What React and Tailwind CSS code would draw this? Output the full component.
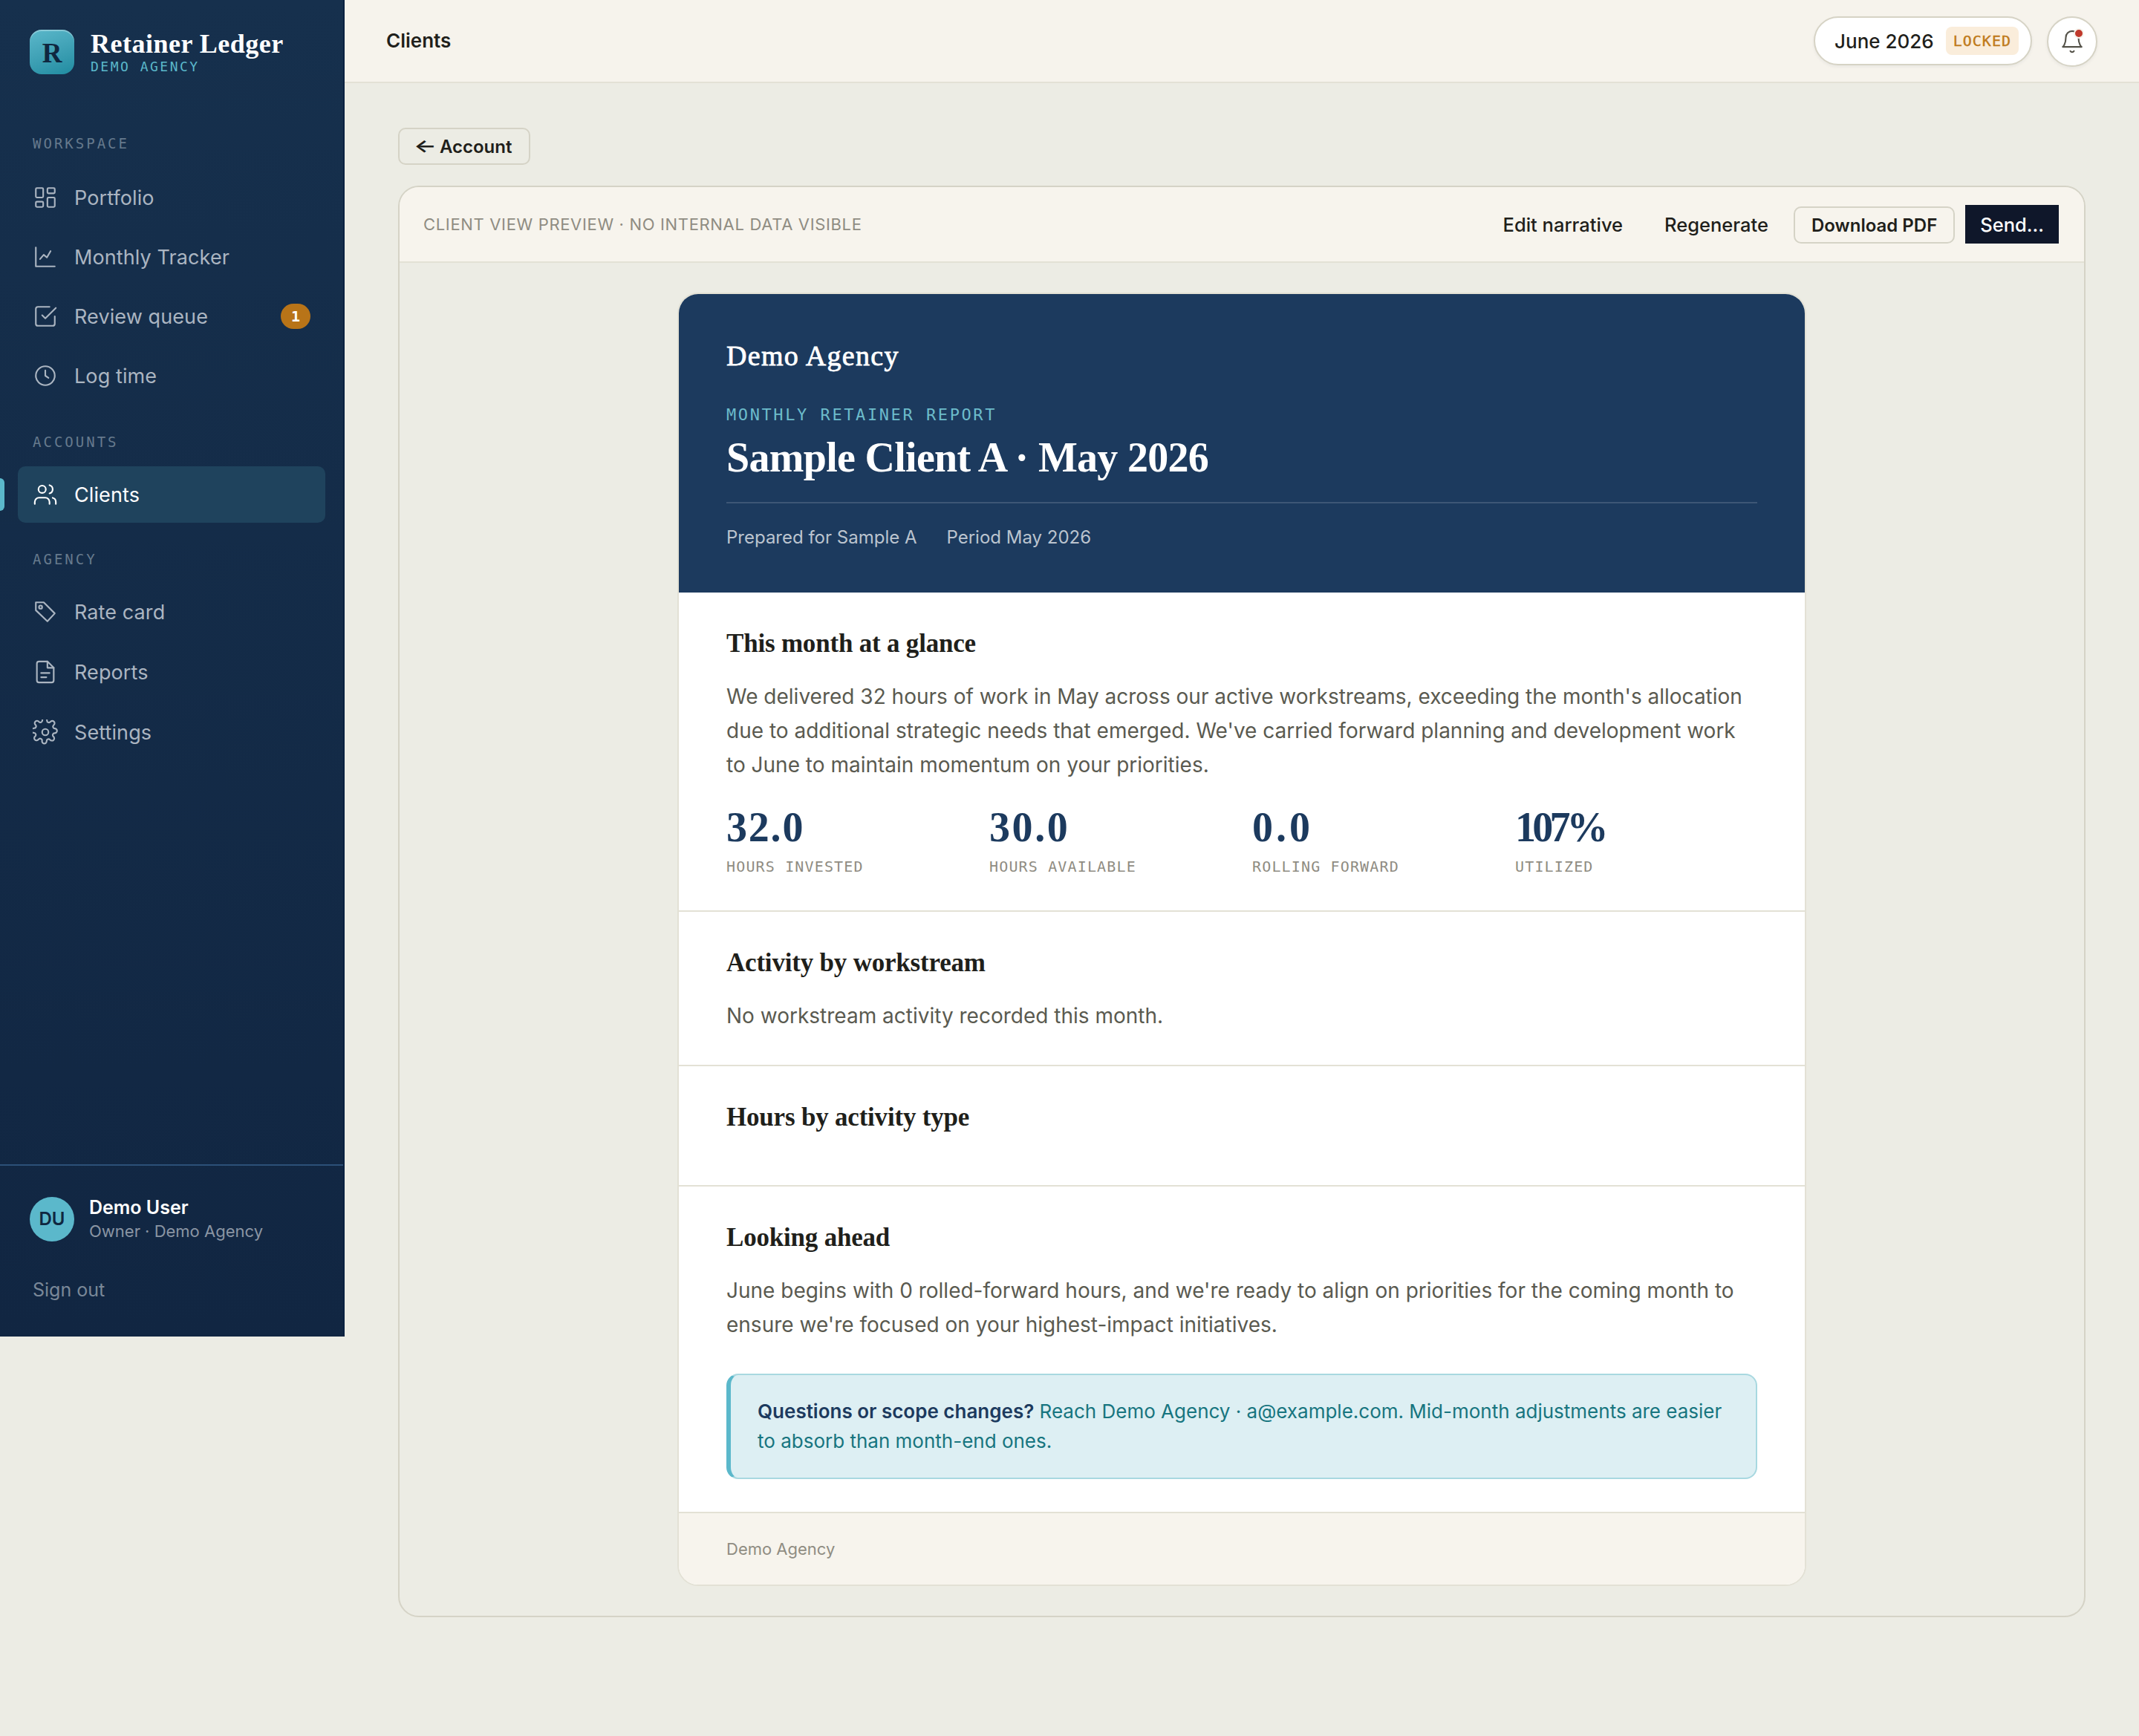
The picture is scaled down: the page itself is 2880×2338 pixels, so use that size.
import React from 'react';

const SERIF = "font-['Liberation_Serif',serif]";
const MONO = "font-['DejaVu_Sans_Mono',monospace]";

const icons = {
    portfolio: (
        <>
            <rect x="3" y="3" width="7" height="9" rx="1" />
            <rect x="14" y="3" width="7" height="5" rx="1" />
            <rect x="14" y="12" width="7" height="9" rx="1" />
            <rect x="3" y="16" width="7" height="5" rx="1" />
        </>
    ),
    tracker: (
        <>
            <path d="M3 3v18h18" />
            <path d="M7 14l3.5-4 3 2.5L17 6.5" />
        </>
    ),
    review: (
        <>
            <path d="M9 11l3 3L22 4" />
            <path d="M21 12v7a2 2 0 0 1-2 2H5a2 2 0 0 1-2-2V5a2 2 0 0 1 2-2h11" />
        </>
    ),
    clock: (
        <>
            <circle cx="12" cy="12" r="9" />
            <path d="M12 7v5l3 2" />
        </>
    ),
    clients: (
        <>
            <path d="M16 21v-2a4 4 0 0 0-4-4H6a4 4 0 0 0-4 4v2" />
            <circle cx="9" cy="7" r="3.5" />
            <path d="M22 21v-2a4 4 0 0 0-3-3.87" />
            <path d="M16 3.13a4 4 0 0 1 0 7.75" />
        </>
    ),
    tag: (
        <>
            <path d="M3 3h7.5L21 13.5l-7 7.5L3 10.5V3z" />
            <circle cx="7.5" cy="7.5" r="1.5" />
        </>
    ),
    report: (
        <>
            <path d="M14 2H6a2 2 0 0 0-2 2v16a2 2 0 0 0 2 2h12a2 2 0 0 0 2-2V8z" />
            <path d="M14 2v6h6M8 13h8M8 17h5" />
        </>
    ),
    settings: (
        <>
            <circle cx="12" cy="12" r="3" />
            <path
                transform="translate(-2.15 -2.4) scale(1.1)"
                strokeWidth="1.36"
                d="M19.4 15a1.7 1.7 0 0 0 .3 1.8l.1.1a2 2 0 1 1-2.8 2.8l-.1-.1a1.7 1.7 0 0 0-2.9 1.2V21a2 2 0 1 1-4 0v-.1A1.7 1.7 0 0 0 7 19.4l-.1.1a2 2 0 1 1-2.8-2.8l.1-.1a1.7 1.7 0 0 0-1.2-2.9H3a2 2 0 1 1 0-4h.1A1.7 1.7 0 0 0 4.6 7l-.1-.1a2 2 0 1 1 2.8-2.8l.1.1a1.7 1.7 0 0 0 2.9-1.2V3a2 2 0 1 1 4 0v.1a1.7 1.7 0 0 0 2.9 1.2l.1-.1a2 2 0 1 1 2.8 2.8l-.1.1a1.7 1.7 0 0 0 1.2 2.9H21a2 2 0 1 1 0 4h-.1a1.7 1.7 0 0 0-1.5 1z"
            />
        </>
    ),
    bell: (
        <>
            <path d="M6 8a6 6 0 0 1 12 0c0 7 3 9 3 9H3s3-2 3-9" />
            <path d="M10.3 21a1.94 1.94 0 0 0 3.4 0" />
        </>
    ),
};

const Icon = ({ name, className }) => (
    <svg
        className={className}
        viewBox="0 0 24 24"
        fill="none"
        stroke="currentColor"
        strokeWidth="1.5"
        strokeLinecap="round"
        strokeLinejoin="round"
    >
        {icons[name]}
    </svg>
);

const navGroups = [
    {
        label: 'Workspace',
        labelClass: 'mt-[79px] mb-[21px]',
        listClass: 'gap-1',
        items: [
            { name: 'Portfolio', icon: 'portfolio' },
            { name: 'Monthly Tracker', icon: 'tracker' },
            { name: 'Review queue', icon: 'review', badge: 1 },
            { name: 'Log time', icon: 'clock' },
        ],
    },
    {
        label: 'Accounts',
        labelClass: 'mt-[37px] mb-[19px]',
        listClass: 'gap-1',
        items: [{ name: 'Clients', icon: 'clients', active: true }],
    },
    {
        label: 'Agency',
        labelClass: 'mt-[35px] mb-[19px]',
        listClass: 'gap-[5px]',
        items: [
            { name: 'Rate card', icon: 'tag' },
            { name: 'Reports', icon: 'report' },
            { name: 'Settings', icon: 'settings' },
        ],
    },
];

const stats = [
    { value: '32.0', label: 'Hours invested', tracking: 'tracking-[1.8px]' },
    { value: '30.0', label: 'Hours available', tracking: 'tracking-[2.6px]' },
    { value: '0.0', label: 'Rolling forward', tracking: 'tracking-[4px]' },
    { value: '107%', label: 'Utilized', tracking: 'tracking-[-4.8px]' },
];

const NavItem = ({ item }) => (
    <div
        className={`relative flex h-[76px] items-center gap-[22px] rounded-[10px] px-5 text-[27px] ${
            item.active ? 'bg-[#1f435d] text-white' : 'text-[#abb5c1]'
        }`}
    >
        {item.active && (
            <span className="absolute top-4 -left-6 h-11 w-1.5 rounded-r-md bg-[#5bb8cb]"></span>
        )}
        <Icon name={item.icon} className="size-[34px] shrink-0" />
        <span className="pt-0.5 tracking-[0.1px]">{item.name}</span>
        {item.badge && (
            <span
                className={`ml-auto flex h-[34px] w-10 items-center justify-center rounded-full bg-[#b87418] text-[20px] font-bold text-white ${MONO}`}
            >
                {item.badge}
            </span>
        )}
    </div>
);

const Sidebar = () => (
    <aside className="flex h-[1800px] w-[464px] shrink-0 flex-col border-r-2 border-[#0a2140] bg-linear-to-b from-[#16304d] to-[#112642]">
        <div className="flex px-10 pt-10">
            <div
                className={`flex size-[60px] items-center justify-center rounded-[16px] bg-linear-160 from-[#5bb8cb] to-[#1f8ca1] pt-1 text-[37px] font-bold text-[#0f2740] shadow-[inset_0_2px_0_rgba(255,255,255,0.3)] ${SERIF}`}
            >
                R
            </div>
            <div className="ml-[22px]">
                <div
                    className={`pt-px text-[36px] leading-9 font-bold tracking-[0.5px] whitespace-nowrap text-white ${SERIF}`}
                >
                    Retainer Ledger
                </div>
                <div
                    className={`mt-[3px] text-[18px] leading-5 tracking-[2.5px] whitespace-nowrap text-[#5bb8cb] uppercase ${MONO}`}
                >
                    Demo Agency
                </div>
            </div>
        </div>

        <nav className="flex flex-col px-6">
            {navGroups.map(group => (
                <div key={group.label}>
                    <div
                        className={`pl-5 text-[19px] leading-7 tracking-[3px] text-[#667a8d] uppercase ${MONO} ${group.labelClass}`}
                    >
                        {group.label}
                    </div>
                    <div className={`flex flex-col ${group.listClass}`}>
                        {group.items.map(item => (
                            <NavItem key={item.name} item={item} />
                        ))}
                    </div>
                </div>
            ))}
        </nav>

        <div className="mt-auto h-[232px] border-t-2 border-[#2c5078] px-10 pt-10">
            <div className="flex items-center gap-5">
                <div className="flex size-[60px] items-center justify-center rounded-full bg-[#5bb8cb] text-[24px] font-semibold text-[#0f2740]">
                    DU
                </div>
                <div className="pt-px">
                    <div className="text-[25px] leading-[31px] font-semibold text-white">Demo User</div>
                    <div className="text-[22px] leading-8 text-[#8a95a3]">Owner · Demo Agency</div>
                </div>
            </div>
            <div className="mt-[45px] pl-1 text-[25px] leading-9 text-[#7a8898]">Sign out</div>
        </div>
    </aside>
);

const TopBar = () => (
    <header className="flex h-28 items-start justify-between border-b-2 border-[#e3e1d5] bg-[#f6f3ec] px-14">
        <h1 className="text-[26px] leading-[110px] font-semibold">Clients</h1>
        <div className="flex items-start gap-5 pt-[22px]">
            <div className="flex h-[66px] items-center gap-4 rounded-full border-2 border-[#d6d3c5] bg-white pr-4 pl-[26px] shadow-[0_2px_4px_rgba(20,40,60,0.06)]">
                <span className="text-[26px] font-medium">June 2026</span>
                <span
                    className={`flex h-[38px] items-center rounded-lg bg-[#faeddb] px-2.5 text-[20px] font-medium tracking-[1px] text-[#bf7a1a] [-webkit-text-stroke:0.4px] ${MONO}`}
                >
                    LOCKED
                </span>
            </div>
            <div className="relative flex size-[68px] items-center justify-center rounded-full border-2 border-[#d6d3c5] bg-white text-[#55534a] shadow-[0_2px_4px_rgba(20,40,60,0.06)]">
                <Icon name="bell" className="size-[34px]" />
                <span className="absolute top-3.5 right-4 size-3.5 rounded-full border-2 border-[#f6f3ec] bg-[#c0392b]"></span>
            </div>
        </div>
    </header>
);

const Section = ({ title, children, last }) => (
    <section className={`px-16 pt-[45px] pb-[43px] ${last ? '' : 'border-b-2 border-[#e3e1d5]'}`}>
        <h3 className={`mb-6 text-[35px] leading-[48px] font-bold tracking-[-0.2px] ${SERIF}`}>{title}</h3>
        {children}
    </section>
);

const bodyText = 'text-[28px] leading-[46.2px] text-[#5a5a50]';

const Report = () => (
    <article className="mx-auto w-[1520px] overflow-hidden rounded-[28px] border-2 border-[#e3e1d5] bg-white">
        <div className="h-[402px] bg-[#1c3a5e] px-16 pt-14 text-white">
            <div className={`text-[38px] leading-[54px] tracking-[1.3px] [-webkit-text-stroke:0.8px] ${SERIF}`}>
                Demo Agency
            </div>
            <div className={`mt-9 text-[22px] leading-[34px] tracking-[2.58px] text-[#6cbccb] uppercase ${MONO}`}>
                Monthly retainer report
            </div>
            <h2 className={`mt-[9px] text-[56px] leading-[62px] font-bold tracking-[-0.7px] ${SERIF}`}>
                Sample Client A · May 2026
            </h2>
            <div className="mt-[29px] flex gap-10 border-t-2 border-white/15 pt-7 text-[24px] leading-9 text-[#bbc4cf]">
                <span>Prepared for Sample A</span>
                <span>Period May 2026</span>
            </div>
        </div>

        <Section title="This month at a glance">
            <p className={bodyText}>
                We delivered 32 hours of work in May across our active workstreams, exceeding the month's allocation
                <br />
                due to additional strategic needs that emerged. We've carried forward planning and development work
                <br />
                to June to maintain momentum on your priorities.
            </p>
            <div className="mt-8 grid grid-cols-4 gap-7">
                {stats.map(stat => (
                    <div key={stat.label}>
                        <div
                            className={`text-[56px] leading-[56px] font-bold text-[#1c3a5e] ${stat.tracking} ${SERIF}`}
                        >
                            {stat.value}
                        </div>
                        <div
                            className={`mt-2.5 mb-px text-[20px] leading-[30px] tracking-[1.15px] text-[#8f8c82] uppercase ${MONO}`}
                        >
                            {stat.label}
                        </div>
                    </div>
                ))}
            </div>
        </Section>

        <Section title="Activity by workstream">
            <p className={bodyText}>No workstream activity recorded this month.</p>
        </Section>

        <Section title="Hours by activity type" />

        <Section title="Looking ahead" last>
            <p className={bodyText}>
                June begins with 0 rolled-forward hours, and we're ready to align on priorities for the coming month to
                <br />
                ensure we're focused on your highest-impact initiatives.
            </p>
            <div className="mt-[43px] mb-px rounded-2xl border-2 border-l-[6px] border-[#a8d8e0] border-l-[#5bb8cb] bg-[#ddeff3] px-9 py-[29px] text-[26px] leading-10 text-[#17757f]">
                <strong className="font-semibold text-[#1c3a5e]">Questions or scope changes?</strong> Reach Demo Agency
                · a@example.com. Mid-month adjustments are easier
                <br />
                to absorb than month-end ones.
            </div>
        </Section>

        <footer className="border-t-2 border-[#e3e1d5] bg-[#f7f4ed] px-16 py-8 text-[22px] leading-8 text-[#8f8c82]">
            Demo Agency
        </footer>
    </article>
);

const App = () => {
    return (
        <div className="flex min-h-[2338px] w-[2880px] items-start bg-[#ecece4] font-['Inter',sans-serif] text-[#1f1f1b]">
            <Sidebar />
            <div className="flex-1">
                <TopBar />
                <main className="px-[72px] pt-[60px]">
                    <button className="flex h-[50px] items-center rounded-[10px] border-2 border-[#d5d3c6] pr-[23px] pl-[19px] text-[24px] font-semibold">
                        <span className="mr-3 origin-left scale-x-135">←</span>
                        <span className="pt-px">Account</span>
                    </button>

                    <div className="mt-7 overflow-hidden rounded-[28px] border-2 border-[#d5d3c6]">
                        <div className="flex h-[102px] items-center justify-between border-b-2 border-[#e3e1d5] bg-[#f7f4ed] pr-[34px] pl-8">
                            <span className="text-[22px] tracking-[0.66px] text-[#8f8c82]">
                                CLIENT VIEW PREVIEW · NO INTERNAL DATA VISIBLE
                            </span>
                            <div className="flex items-center">
                                <button className="px-5 pt-0.5 text-[25.5px] font-medium">Edit narrative</button>
                                <button className="ml-4 px-5 pt-0.5 text-[25.5px] font-medium">Regenerate</button>
                                <button className="mt-0.5 ml-3.5 h-[50px] rounded-[10px] border-2 border-[#d5d3c6] px-[22px] pt-px text-[24px] font-semibold">
                                    Download PDF
                                </button>
                                <button className="ml-3.5 h-[52px] bg-[#0f172a] px-5 pt-0.5 text-[25.5px] font-medium text-white">
                                    Send…
                                </button>
                            </div>
                        </div>
                        <div className="py-10">
                            <Report />
                        </div>
                    </div>
                </main>
            </div>
        </div>
    );
};

export default App;
